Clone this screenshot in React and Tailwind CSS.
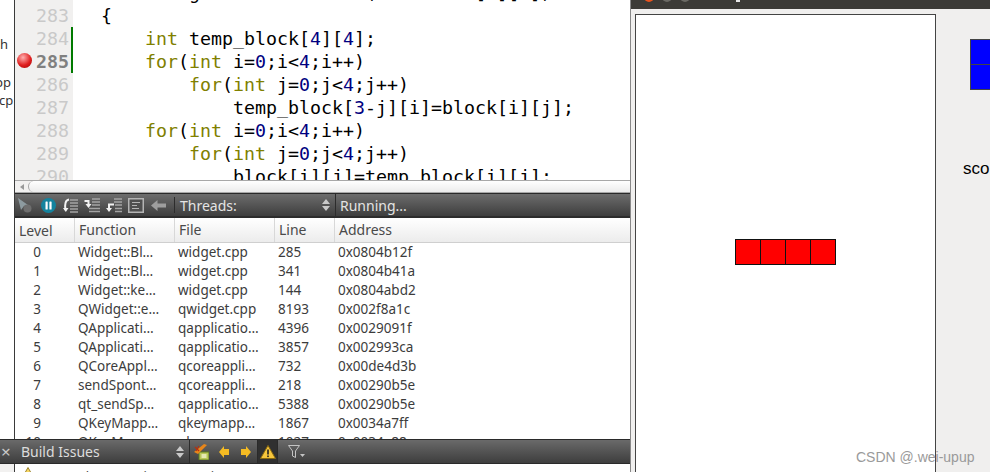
import React from "react";

const mono = "font-['DejaVu_Sans_Mono',monospace]";
const ui = "font-['Noto_Sans',sans-serif]";

const K = ({ children }) => <span className="text-[#808000]">{children}</span>;
const N = ({ children }) => <span className="text-[#000080]">{children}</span>;

const lines = [
  { no: 282, code: <>void Widget::BlockRotate(int block[4][4])</> },
  { no: 283, code: <>{"{"}</> },
  { no: 284, mark: true, code: <>{"    "}<K>int</K> temp_block[<N>4</N>][<N>4</N>];</> },
  { no: 285, mark: true, bp: true, code: <>{"    "}<K>for</K>(<K>int</K> i=<N>0</N>;i&lt;<N>4</N>;i++)</> },
  { no: 286, code: <>{"        "}<K>for</K>(<K>int</K> j=<N>0</N>;j&lt;<N>4</N>;j++)</> },
  { no: 287, code: <>{"            "}temp_block[<N>3</N>-j][i]=block[i][j];</> },
  { no: 288, code: <>{"    "}<K>for</K>(<K>int</K> i=<N>0</N>;i&lt;<N>4</N>;i++)</> },
  { no: 289, code: <>{"        "}<K>for</K>(<K>int</K> j=<N>0</N>;j&lt;<N>4</N>;j++)</> },
  { no: 290, code: <>{"            "}block[i][j]=temp_block[i][j];</> },
];

const frames = [
  ["0", "Widget::Bl…", "widget.cpp", "285", "0x0804b12f"],
  ["1", "Widget::Bl…", "widget.cpp", "341", "0x0804b41a"],
  ["2", "Widget::ke…", "widget.cpp", "144", "0x0804abd2"],
  ["3", "QWidget::e…", "qwidget.cpp", "8193", "0x002f8a1c"],
  ["4", "QApplicati…", "qapplicatio…", "4396", "0x0029091f"],
  ["5", "QApplicati…", "qapplicatio…", "3857", "0x002993ca"],
  ["6", "QCoreAppl…", "qcoreappli…", "732", "0x00de4d3b"],
  ["7", "sendSpont…", "qcoreappli…", "218", "0x00290b5e"],
  ["8", "qt_sendSp…", "qapplicatio…", "5388", "0x00290b5e"],
  ["9", "QKeyMapp…", "qkeymapp…", "1867", "0x0034a7ff"],
  ["10", "QKeyMapp…", "qkeymapp…", "1027", "0x0034a88c"],
];

const HeadCell = ({ className, children }) => (
  <div className={`pl-[4px] border-l border-[#d8d8d8] h-full leading-[24px] ${className}`}>{children}</div>
);

const Head = () => (
  <div className="flex h-[24px] items-center text-[14px]">
    <div className="w-[59px] pl-[4px]">Level</div>
    <HeadCell className="w-[100px]">Function</HeadCell>
    <HeadCell className="w-[100px]">File</HeadCell>
    <HeadCell className="w-[60px]">Line</HeadCell>
    <HeadCell className="flex-1">Address</HeadCell>
  </div>
);

const Row = ({ row }) => (
  <div className="flex h-[19px] items-center">
    <div className="w-[59px] pr-[33px] text-right">{row[0]}</div>
    <div className="w-[100px] pl-[4px]">{row[1]}</div>
    <div className="w-[100px] pl-[4px]">{row[2]}</div>
    <div className="w-[60px] pl-[4px]">{row[3]}</div>
    <div className="flex-1 pl-[4px]">{row[4]}</div>
  </div>
);

const UpDown = () => (
  <svg width="8" height="14" viewBox="0 0 8 14" className="shrink-0">
    <path d="M4 1 L8 6 H0 Z M4 13 L8 8 H0 Z" fill="#c9c9c9" />
  </svg>
);

const DebugIcons = () => (
  <div className="flex items-center h-full pl-[3px]">
    {/* start debugging, disabled */}
    <svg width="14" height="15" viewBox="0 0 14 15">
      <path d="M0 0 L10 7 L6 8 L3 12 Z" fill="#8d9ba0" />
      <circle cx="9.5" cy="10.5" r="4" fill="#6e6e6e" />
    </svg>
    {/* interrupt */}
    <svg width="15" height="15" viewBox="0 0 15 15" className="ml-[9px]">
      <circle cx="7.5" cy="7.5" r="7.5" fill="#14839e" />
      <rect x="4.5" y="3.5" width="2.2" height="8" rx="0.6" fill="#fff" />
      <rect x="8.4" y="3.5" width="2.2" height="8" rx="0.6" fill="#fff" />
    </svg>
    {/* step over */}
    <svg width="15" height="15" viewBox="0 0 15 15" className="ml-[7px]">
      <path d="M6 1.5 C2.5 2 1.5 6 2.5 12" fill="none" stroke="#f2f2f2" strokeWidth="2" />
      <path d="M0 10 L2.8 14 L5.5 10 Z" fill="#f2f2f2" />
      <path d="M7 2h8M7 5h8M7 8h8M7 11h8M7 14h8" stroke="#a4a4a4" strokeWidth="1.6" />
    </svg>
    {/* step into */}
    <svg width="16" height="15" viewBox="0 0 16 15" className="ml-[6px]">
      <path d="M0.5 3 H4.5 V7" fill="none" stroke="#f2f2f2" strokeWidth="2" />
      <path d="M1.5 6 H7.5 L4.5 10 Z" fill="#f2f2f2" />
      <path d="M8 1h8M8 4h8M8 7h8M5 10.5h11M5 13.5h11" stroke="#a4a4a4" strokeWidth="1.6" />
    </svg>
    {/* step out */}
    <svg width="16" height="15" viewBox="0 0 16 15" className="ml-[6px]">
      <path d="M8 6.5 H3 V11" fill="none" stroke="#f2f2f2" strokeWidth="2" />
      <path d="M0 10 H6 L3 14 Z" fill="#f2f2f2" />
      <path d="M8 1h8M8 4h8M9 7h7M9 10.5h7M9 13.5h7" stroke="#a4a4a4" strokeWidth="1.6" />
    </svg>
    {/* instruction mode */}
    <svg width="16" height="15" viewBox="0 0 16 15" className="ml-[6px]">
      <rect x="0.75" y="0.75" width="14.5" height="13.5" fill="#4f4f4f" stroke="#b4b4b4" strokeWidth="1.5" />
      <path d="M4 4.5h8M4 7.5h5M4 10.5h7" stroke="#b4b4b4" strokeWidth="1.2" />
    </svg>
    {/* back arrow */}
    <svg width="15" height="11" viewBox="0 0 15 11" className="ml-[7px]">
      <path d="M0 5.5 L6.5 0 V3.5 H15 V7.5 H6.5 V11 Z" fill="#9e9e9e" />
    </svg>
  </div>
);

const BuildIcons = () => (
  <div className="flex items-center h-full pl-[4px]">
    <svg width="15" height="16" viewBox="0 0 15 16">
      <rect x="5" y="8" width="10" height="8" fill="#b9c75a" stroke="#5d7a1c" />
      <rect x="7.5" y="10" width="5" height="4" fill="#e5e8b0" />
      <path d="M0 8 L10 0 L13 1 L4 10 Z" fill="#e8861a" />
      <path d="M1 3 L5 7 M5 2 L2 7" stroke="#b8300e" strokeWidth="1.2" />
    </svg>
    <svg width="10" height="12" viewBox="0 0 10 12" className="ml-[10px]">
      <path d="M0 6 L5 0 V3 H10 V9 H5 V12 Z" fill="#f5bb23" />
    </svg>
    <svg width="10" height="12" viewBox="0 0 10 12" className="ml-[12px]">
      <path d="M10 6 L5 0 V3 H0 V9 H5 V12 Z" fill="#f5bb23" />
    </svg>
    <div className="ml-[6px] w-[21px] h-full bg-[#303030] border-x border-[#2a2a2a] flex items-center justify-center">
      <svg width="16" height="14" viewBox="0 0 16 14">
        <path d="M8 0.5 L15.5 13.5 H0.5 Z" fill="#f7c63c" stroke="#8a6a10" />
        <rect x="7.2" y="4.5" width="1.6" height="5" fill="#222" />
        <rect x="7.2" y="10.5" width="1.6" height="1.6" fill="#222" />
      </svg>
    </div>
    <svg width="17" height="13" viewBox="0 0 17 13" className="ml-[10px]">
      <path d="M0.5 0.5 H11.5 L7.5 6 V12.5 L4.5 11 V6 Z" fill="none" stroke="#c4c4c4" />
      <path d="M12 9 H17 L14.5 12 Z" fill="#c4c4c4" />
    </svg>
  </div>
);

export default function App() {
  return (
    <div className="w-[990px] h-[472px] overflow-hidden flex bg-white relative">
      {/* qt creator */}
      <div className="w-[630px] shrink-0 flex flex-col h-full">
        <div className="flex-1 min-h-0 flex">
          {/* project tree sliver */}
          <div className={`w-[15px] shrink-0 overflow-hidden border-r border-[#3a3a3a] text-[#333] text-[13px] ${ui}`}>
            <div className="mt-[34px] h-[20px] leading-[20px]">h</div>
            <div className="mt-[19px] h-[18px] leading-[18px] -ml-[5px]">pp</div>
            <div className="h-[18px] leading-[18px] -ml-[1px]">cp</div>
          </div>

          <div className="flex-1 min-w-0 flex flex-col">
            <div className="h-[180px] shrink-0 flex overflow-hidden">
              <div className={`w-[58px] shrink-0 bg-[#f1f0ef] text-[18.27px] leading-[23px] ${mono}`}>
                <div className="-mt-[19px]">
                  {lines.map((l) => (
                    <div key={l.no} className="h-[23px] flex relative">
                      {l.bp && (
                        <div className="absolute left-[2px] top-[3px] w-[15px] h-[15px] rounded-full bg-[radial-gradient(circle_at_40%_30%,#ffb0b0,#e02020_55%,#a00000)]" />
                      )}
                      <span className={`flex-1 text-right pr-[2px] ${l.bp ? "font-bold text-[#808080]" : "text-[#c9c9c9]"}`}>{l.no}</span>
                      <div className={`w-[2px] ${l.mark ? "bg-[#007a00]" : ""}`} />
                    </div>
                  ))}
                </div>
              </div>
              <div className={`flex-1 pl-[28px] text-[18.27px] leading-[23px] text-black whitespace-pre ${mono}`}>
                <div className="-mt-[19px]">
                  {lines.map((l) => (
                    <div key={l.no} className="h-[23px]">{l.code}</div>
                  ))}
                </div>
              </div>
            </div>

            {/* horizontal scrollbar */}
            <div className="h-[13px] shrink-0 border-y border-[#a8a8a8] bg-[#f2f1f0] flex items-center">
              <div className="w-[13px] flex justify-center">
                <svg width="4" height="6" viewBox="0 0 4 6"><path d="M4 0 L0 3 L4 6 Z" fill="#999" /></svg>
              </div>
              <div className="flex-1 h-full rounded-l-full border-l border-[#a8a8a8] bg-gradient-to-b from-white to-[#ececec]" />
            </div>

            {/* threads toolbar */}
            <div className={`h-[25px] shrink-0 flex items-center border-t border-[#2a2a2a] border-b-2 border-b-[#2c2c2c] bg-gradient-to-b from-[#6d6d6d] to-[#3e3e3e] text-[14px] text-[#e4e4e4] ${ui}`}>
              <div className="w-[159px] h-full shrink-0"><DebugIcons /></div>
              <div className="w-[1px] h-[16px] bg-[#2c2c2c]" />
              <div className="w-[160px] pl-[5px] flex items-center justify-between pr-[5px] h-full">
                <span>Threads:</span>
                <UpDown />
              </div>
              <div className="w-[1px] h-full bg-[#2c2c2c]" />
              <div className="pl-[4px]">Running...</div>
            </div>

            {/* stack view */}
            <div className={`flex-1 min-h-0 overflow-hidden text-[13.5px] text-[#3c3c3c] ${ui}`}>
              <div className="bg-gradient-to-b from-white to-[#ececec] border-b border-[#cfcfcf] text-[#4a4a4a]">
                <Head />
              </div>
              {frames.map((f) => (
                <Row key={f[0]} row={f} />
              ))}
            </div>
          </div>
        </div>

        {/* build issues bar */}
        <div className={`h-[25px] shrink-0 flex items-center border-y border-[#2a2a2a] bg-gradient-to-b from-[#6a6a6a] to-[#3e3e3e] text-[14px] text-[#dcdcdc] ${ui}`}>
          <div className="w-[21px] pl-[1px] text-[17px] text-[#c8c8c8] leading-none shrink-0">×</div>
          <div className="w-[168px] flex items-center justify-between pr-[5px] h-full shrink-0">
            <span>Build Issues</span>
            <UpDown />
          </div>
          <div className="w-[1px] h-full bg-[#2c2c2c]" />
          <div className="h-full"><BuildIcons /></div>
        </div>

        {/* issues list, cut off by the window edge */}
        <div className="h-[8px] shrink-0 flex overflow-hidden">
          <div className="w-[15px] shrink-0 bg-[#f2f1f0] border-r border-[#3a3a3a]" />
          <div className="pl-[6px] pt-[3px] shrink-0">
            <svg width="14" height="12" viewBox="0 0 14 12" className="block">
              <path d="M7 0.5 L13.5 12 H0.5 Z" fill="#f7d560" stroke="#9a8430" />
            </svg>
          </div>
          <div className={`pl-[46px] pt-[3px] text-[13px] text-[#444] leading-[18px] whitespace-nowrap ${ui}`}>
            /home/wei/upup/tetris
          </div>
        </div>
      </div>

      {/* running app window */}
      <div className="flex-1 min-w-0 flex flex-col border-l border-[#888] bg-[#f0efee]">
        <div className="h-[9px] shrink-0 bg-[#3c3b37] flex items-start pl-[13px] gap-[8px] overflow-hidden">
          <div className="w-[10px] h-[10px] -mt-[8px] rounded-full bg-[#e9541f]" />
          <div className="w-[10px] h-[10px] -mt-[8px] rounded-full bg-[#6b6a65]" />
          <div className="w-[10px] h-[10px] -mt-[8px] rounded-full bg-[#6b6a65]" />
          <div className="ml-[38px] w-[4px] h-[2px] bg-[#e8e8e8]" />
        </div>
        <div className="flex-1 flex pl-[4px] pt-[5px] min-h-0">
          <div className="w-[301px] h-[480px] shrink-0 bg-white border border-[#444] flex flex-col">
            <div className="mt-[224px] ml-[99px] flex">
              {[0, 1, 2, 3].map((i) => (
                <div key={i} className={`w-[26px] h-[26px] bg-[#ff0000] border border-[#111] ${i ? "-ml-px" : ""}`} />
              ))}
            </div>
          </div>
          <div className="flex-1 min-w-0 overflow-hidden">
            <div className="ml-[34px] mt-[25px] w-[30px] flex flex-col">
              <div className="h-[26px] bg-[#0000ff] border border-[#444]" />
              <div className="h-[26px] -mt-px bg-[#0000ff] border border-[#444]" />
            </div>
            <div className="ml-[27px] mt-[70px] text-[17px] text-black font-['Liberation_Sans',sans-serif] leading-[18px]">score</div>
          </div>
        </div>
      </div>

      <div className="absolute left-[856px] top-[447px] text-[14px] text-[#9a9a9a] font-['Liberation_Sans',sans-serif] whitespace-nowrap">CSDN @.wei-upup</div>
    </div>
  );
}
